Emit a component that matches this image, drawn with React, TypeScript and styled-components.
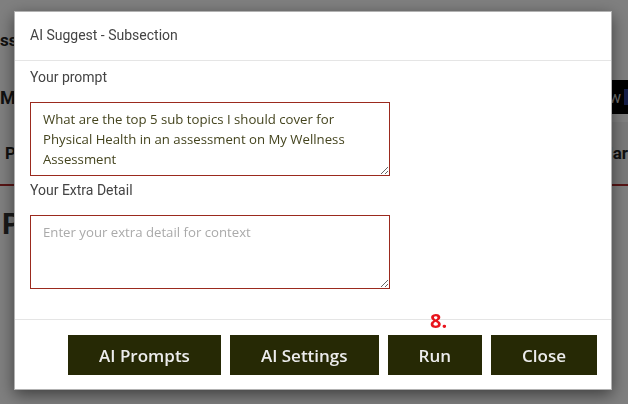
import React from "react";
import styled, { createGlobalStyle } from "styled-components";

const Global = createGlobalStyle`
  html, body { margin: 0; padding: 0; background: #fff; }
  body { width: 628px; height: 404px; overflow: hidden; font-family: Roboto, "Liberation Sans", sans-serif; }
`;

const Page = styled.div`
  width: 628px;
  height: 404px;
  display: flex;
  flex-direction: column;
  background: #fff;
  color: #222;
  overflow: hidden;
`;

const TopBar = styled.div`
  height: 72px;
  display: flex;
  align-items: flex-start;
  padding-top: 30px;
  box-sizing: border-box;
  font: 700 17px/20px Roboto, sans-serif;
`;

const NavRow = styled.div`
  height: 50px;
  display: flex;
  align-items: center;
  justify-content: space-between;
  font: 700 18px Roboto, sans-serif;
`;

const DarkButton = styled.div`
  height: 34px;
  background: #000;
  color: #ddd;
  display: flex;
  align-items: center;
  padding: 0 0 0 2px;
  font: 400 16px Roboto, sans-serif;
  gap: 3px;
`;

const Blue = styled.span`
  display: inline-block;
  width: 4px;
  height: 16px;
  background: #2a3b8f;
`;

const TabRow = styled.div`
  height: 64px;
  display: flex;
  align-items: center;
  justify-content: space-between;
  padding-left: 5px;
  font: 700 17px Roboto, sans-serif;
  border-bottom: 2px solid #b02a2a;
  background: linear-gradient(to right, #fff 50%, #f3f3f3 50%);
  box-sizing: border-box;
`;

const BigTitle = styled.div`
  font: 700 30px Roboto, sans-serif;
  color: #333;
  padding: 20px 0 0 2px;
`;

const Overlay = styled.div`
  position: fixed;
  inset: 0;
  background: rgba(0, 0, 0, 0.5);
`;

const Modal = styled.div`
  position: fixed;
  top: 11px;
  left: 14px;
  width: 598px;
  background: #fff;
  border: 1px solid rgba(0, 0, 0, 0.3);
  box-sizing: border-box;
  box-shadow: 0 5px 15px rgba(0, 0, 0, 0.5);
  display: flex;
  flex-direction: column;
`;

const Header = styled.div`
  padding: 13px 15px 15px;
  border-bottom: 1px solid #e5e5e5;
  font: 400 14px/20px Roboto, sans-serif;
  color: #444;
`;

const Body = styled.div`
  padding: 6px 15px 26px;
  display: flex;
  flex-direction: column;
  align-items: flex-start;
`;

const Label = styled.label`
  display: block;
  font: 400 14px/20px Roboto, sans-serif;
  color: #444;
  margin-bottom: 15px;
`;

const Field = styled.textarea`
  width: 360px;
  height: 74px;
  box-sizing: border-box;
  border: 1px solid #9b2a1e;
  border-radius: 0;
  padding: 6px 12px;
  margin: 0 0 4px;
  font: 400 13.2px/20px "Open Sans", sans-serif;
  color: #45451f;
  resize: vertical;
  outline: none;
  &::placeholder { color: #aaa; }
`;

const Footer = styled.div`
  position: relative;
  border-top: 1px solid #e5e5e5;
  padding: 15px 14px 14px 15px;
  display: flex;
  justify-content: flex-end;
  gap: 9px;
`;

const Button = styled.button`
  height: 40px;
  padding: 0 31px;
  border: none;
  border-radius: 0;
  background: #262905;
  color: #ececec;
  font: 600 17px "Open Sans", sans-serif;
  cursor: pointer;
`;

const Marker = styled.span`
  position: absolute;
  top: -13px;
  left: 415px;
  color: #e8141c;
  font: 700 20px "Open Sans", sans-serif;
`;

export default function App() {
  return (
    <>
      <Global />
      <Page>
        <TopBar>ss</TopBar>
        <NavRow>
          <span>M</span>
          <DarkButton>
            <span>w</span>
            <Blue />
          </DarkButton>
        </NavRow>
        <TabRow>
          <span>P</span>
          <span>lar</span>
        </TabRow>
        <BigTitle>P</BigTitle>
      </Page>
      <Overlay />
      <Modal>
        <Header>AI Suggest - Subsection</Header>
        <Body>
          <Label>Your prompt</Label>
          <Field defaultValue="What are the top 5 sub topics I should cover for Physical Health in an assessment on My Wellness Assessment" />
          <Label>Your Extra Detail</Label>
          <Field placeholder="Enter your extra detail for context" />
        </Body>
        <Footer>
          <Marker>8.</Marker>
          <Button>AI Prompts</Button>
          <Button>AI Settings</Button>
          <Button>Run</Button>
          <Button>Close</Button>
        </Footer>
      </Modal>
    </>
  );
}
